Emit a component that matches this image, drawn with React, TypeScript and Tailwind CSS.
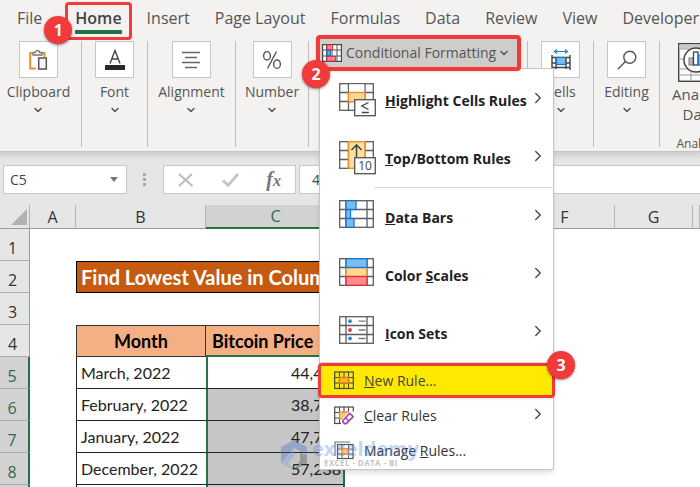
import { type ReactNode } from "react"
import clsx from "clsx"
import { ChevronDown, ChevronRight } from "lucide-react"

const tabs = ["File", "Home", "Insert", "Page Layout", "Formulas", "Data", "Review", "View", "Developer"]

const rows = [
  { n: 5, month: "March, 2022", price: "44,458" },
  { n: 6, month: "February, 2022", price: "38,733" },
  { n: 7, month: "January, 2022", price: "47,733" },
  { n: 8, month: "December, 2022", price: "57,238" },
  { n: 9, month: "November, 2022", price: "61,320" },
]

function Badge({ children, className }: { children: ReactNode; className: string }) {
  return (
    <span
      className={clsx(
        "absolute z-30 flex size-7 items-center justify-center rounded-full bg-[#f23a3a] text-base font-bold text-white shadow-sm shadow-black/40",
        className
      )}
    >
      {children}
    </span>
  )
}

/* Ribbon icons */

function ClipboardIcon() {
  return (
    <svg width="20" height="22" viewBox="0 0 20 22" fill="none">
      <path d="M6 4H2.2v15.5H8M14 4h2.5v4" stroke="#e8912d" strokeWidth="2" />
      <path d="M5 6V3.5h2.5a2 2 0 0 1 4 0H14V6z" fill="#fff" stroke="#777" strokeWidth="1.3" />
      <rect x="10.7" y="9" width="7.6" height="11" fill="#f5f5f5" stroke="#555" strokeWidth="1.5" />
    </svg>
  )
}

function FontIcon() {
  return (
    <svg width="20" height="22" viewBox="0 0 20 22" fill="none">
      <path d="M5 14.5 10 1.5l5 13M6.8 10h6.4" stroke="#444" strokeWidth="1.4" />
      <rect x="0" y="16" width="20" height="5" fill="#2b2627" />
    </svg>
  )
}

function AlignIcon() {
  return (
    <svg width="18" height="20" viewBox="0 0 18 20" stroke="#666" strokeWidth="1.5">
      <path d="M0 2.5h18M3 7.5h12M0 12.5h18M3 17.5h12" />
    </svg>
  )
}

function PercentIcon() {
  return (
    <svg width="20" height="20" viewBox="0 0 20 20" fill="none" stroke="#555" strokeWidth="1.4">
      <ellipse cx="5" cy="5.8" rx="3.4" ry="4.2" />
      <ellipse cx="15" cy="14.2" rx="3.4" ry="4.2" />
      <path d="M14.5 1.5 5.5 18.5" />
    </svg>
  )
}

function CellsIcon() {
  return (
    <svg width="20" height="22" viewBox="0 0 20 22" fill="none">
      <path d="M1 6v15M5 8v12M15 8v12M19 6v15M1 8.5h18M1 14h4M15 14h4M1 18.5h18" stroke="#444" strokeWidth="1.4" />
      <rect x="5.5" y="8.5" width="9" height="7" fill="#7cbcf0" stroke="#1a73c7" strokeWidth="1.2" />
      <path d="M4 2.5h12M6 .5l-2.5 2 2.5 2M14 .5l2.5 2-2.5 2" stroke="#2b7cd3" strokeWidth="1.2" />
    </svg>
  )
}

function SearchIcon() {
  return (
    <svg width="20" height="20" viewBox="0 0 20 20" fill="none" stroke="#555" strokeWidth="1.4">
      <circle cx="12.8" cy="7.2" r="6" />
      <path d="M8.5 11.5.8 19.2" />
    </svg>
  )
}

function AnalyzeIcon() {
  return (
    <svg width="42" height="39" viewBox="0 0 42 39" fill="none">
      <rect x=".7" y=".7" width="40.6" height="37.6" fill="#fafafa" stroke="#444" strokeWidth="1.4" />
      <path d="M1.4 1.4h39v4h-39z" fill="#c9c9c9" />
      <path d="M1 6h40M1 16h6M1 26h9M1 32h40M13 26v12M27 32v6" stroke="#999" />
      <circle cx="18" cy="17" r="12" fill="#fff" stroke="#444" strokeWidth="1.5" />
      <rect x="11" y="15" width="4" height="7" fill="#bbb" stroke="#777" />
      <rect x="15.5" y="9" width="4.5" height="13" fill="#fff" stroke="#444" strokeWidth="1.3" />
      <rect x="20.5" y="12" width="4" height="10" fill="#7cbcf0" stroke="#1a73c7" />
    </svg>
  )
}

function ConditionalIcon() {
  return (
    <svg width="20" height="18" viewBox="0 0 20 18" fill="none">
      <rect x=".6" y=".6" width="18.8" height="16.8" fill="#fff" stroke="#444" strokeWidth="1.2" />
      <path d="M4.5 0v18M15 0v18M0 6h20M0 12h20M10 6v6" stroke="#555" />
      <rect x="5" y="1" width="5.5" height="4.5" fill="#ff8a8f" stroke="#e8323c" />
      <rect x="5" y="6.5" width="3.5" height="5" fill="#5ba7e8" stroke="#1a73c7" />
      <rect x="5" y="12.5" width="8.5" height="4.5" fill="#ff8a8f" stroke="#e8323c" />
    </svg>
  )
}

/* Large menu icons share one cell grid */

function Grid({ children, cols = "M7 1v26M28 1v26" }: { children?: ReactNode; cols?: string }) {
  return (
    <svg width="38" height="34" viewBox="0 0 38 34" fill="none">
      <rect x=".7" y=".7" width="33.6" height="26.6" fill="#fff" stroke="#5c5c5c" strokeWidth="1.3" />
      <path d={cols} stroke="#5c5c5c" strokeWidth="1.3" />
      <path d="M1 9.5h33M1 18.5h33" stroke="#5c5c5c" strokeWidth="1.3" />
      {children}
    </svg>
  )
}

const highlightIcon = (
  <Grid cols="M9.5 1v26M26 1v26">
    <rect x="10.2" y="1.4" width="15" height="7.5" fill="#fff" />
    <rect x="9.5" y="9.5" width="16.5" height="9" fill="#fbd995" stroke="#e8912d" strokeWidth="1.4" />
    <rect x="15.7" y="16.7" width="20.6" height="16" fill="#fff" stroke="#5c5c5c" strokeWidth="1.4" />
    <path d="M29.5 19.5 22.8 23l6.7 3.5M22.8 29.5h7" stroke="#444" strokeWidth="1.3" />
  </Grid>
)

const topBottomIcon = (
  <Grid cols="M9.5 1v26M26 1v26">
    <rect x="9.5" y=".7" width="16.5" height="26.6" fill="#fbdf9f" stroke="#e8912d" strokeWidth="1.5" />
    <path d="M17.5 17V4M12.5 9l5-5.2 5 5.2" stroke="#444" strokeWidth="1.5" />
    <rect x="15.7" y="16.7" width="20.6" height="16" fill="#fff" stroke="#5c5c5c" strokeWidth="1.4" />
    <text x="26" y="29" textAnchor="middle" fontSize="12" fontWeight="400" fill="#444">
      10
    </text>
  </Grid>
)

const dataBarsIcon = (
  <Grid>
    <rect x="7" y=".7" width="10" height="8.8" fill="#7cbcf0" stroke="#1a73c7" strokeWidth="1.3" />
    <rect x="7" y="9.5" width="4.5" height="9" fill="#7cbcf0" stroke="#1a73c7" strokeWidth="1.3" />
    <rect x="7" y="18.5" width="8" height="8.8" fill="#7cbcf0" stroke="#1a73c7" strokeWidth="1.3" />
  </Grid>
)

const colorScalesIcon = (
  <Grid>
    <rect x="7" y="9.5" width="21" height="9" fill="#fbd98f" stroke="#e8912d" strokeWidth="1.3" />
    <rect x="7" y=".7" width="21" height="8.8" fill="#7cbcf0" stroke="#1a73c7" strokeWidth="1.3" />
    <rect x="7" y="18.5" width="21" height="8.8" fill="#ff8a8f" stroke="#d92f38" strokeWidth="1.3" />
  </Grid>
)

const iconSetsIcon = (
  <Grid>
    <circle cx="11" cy="5.2" r="1.9" fill="#2b88d8" />
    <circle cx="11" cy="14" r="1.9" fill="#e8323c" />
    <circle cx="11" cy="22.5" r="1.9" fill="#2b88d8" />
    <path d="M19.5 5.2h7M19.5 14h7M19.5 22.5h7" stroke="#777" strokeWidth="1.3" />
  </Grid>
)

function SmallGrid({ children, fill = "#fff" }: { children?: ReactNode; fill?: string }) {
  return (
    <svg width="20" height="19" viewBox="0 0 20 19" fill="none">
      <rect x=".7" y="1" width="18.6" height="16.5" fill={fill} stroke="#4a4a4a" strokeWidth="1.2" />
      <path d="M5.5 1v17M14.5 1v17M0 6.5h20M0 12h20M10 1v17" stroke="#4a4a4a" strokeWidth="1.1" />
      {children}
    </svg>
  )
}

const newRuleIcon = (
  <SmallGrid fill="#ffe800">
    <rect x="5.5" y="6.5" width="9" height="5.5" fill="#fbb829" stroke="#e87a1d" strokeWidth="1.4" />
  </SmallGrid>
)

const clearIcon = (
  <SmallGrid>
    <rect x="5.5" y="6" width="9" height="6.5" fill="#fbc878" stroke="#e8912d" strokeWidth="1.3" />
    <path d="M7 19v-5l8.5-8.5H20V19z" fill="#fff" />
    <path d="m8.8 14.5 7-7 3.4 3.2-7 7h-1.6l-1.8-1.7z" fill="#fff" stroke="#9b45b5" strokeWidth="1.7" />
    <path d="m11.5 11.8 3.5 3.4" stroke="#9b45b5" strokeWidth="1.5" />
  </SmallGrid>
)

const manageIcon = (
  <svg width="20" height="19" viewBox="0 0 20 19" fill="none">
    <path d="M1 15V1h15" stroke="#777" strokeWidth="1.2" />
    <rect x="3.5" y="3.5" width="15.5" height="14" fill="#fff" stroke="#555" strokeWidth="1.2" />
    <path d="M8 3.5v14M14.5 3.5v14M3.5 8h15.5M3.5 13h15.5" stroke="#666" />
    <rect x="8" y="8" width="6.5" height="5" fill="#fbc878" stroke="#e8912d" strokeWidth="1.2" />
  </svg>
)

function Group({ icon, label, className }: { icon: ReactNode; label: string; className: string }) {
  return (
    <div className={clsx("mt-1.5 flex h-[106px] shrink-0 justify-center border-r border-[#bdbdbd]", className)}>
      <button type="button" className="flex flex-col items-center">
        <span className="flex h-[37px] w-[39px] items-center justify-center border border-[#c8c6c4] bg-white">
          {icon}
        </span>
        <span className="mt-1 leading-5">{label}</span>
        <ChevronDown size={12} strokeWidth={3} className="mt-0.5" />
      </button>
    </div>
  )
}

function LargeItem({ icon, children }: { icon: ReactNode; children: ReactNode }) {
  return (
    <button
      type="button"
      role="menuitem"
      className="flex h-[58px] w-full items-center pr-1.5 pl-[19px] text-left font-bold text-[#222]"
    >
      {icon}
      <span className="mt-0.5 ml-2 flex-1 whitespace-nowrap">{children}</span>
      <ChevronRight size={18} strokeWidth={1.75} className="mb-1 text-[#444]" />
    </button>
  )
}

function SmallItem({ icon, arrow, children }: { icon: ReactNode; arrow?: boolean; children: ReactNode }) {
  return (
    <button type="button" role="menuitem" className="flex h-[35px] w-full items-center pr-1.5 pl-3.5 text-left text-[#333]">
      {icon}
      <span className="ml-2.5 flex-1 whitespace-nowrap">{children}</span>
      {arrow && <ChevronRight size={18} strokeWidth={1.75} className="mb-1 text-[#444]" />}
    </button>
  )
}

function RulesMenu() {
  return (
    <div
      role="menu"
      className="absolute top-[33px] left-[3px] z-10 w-[235px] border border-[#c6c6c6] bg-white pt-0.5 pb-px shadow-md"
    >
      <LargeItem icon={highlightIcon}>
        <u>H</u>ighlight Cells Rules
      </LargeItem>
      <LargeItem icon={topBottomIcon}>
        <u>T</u>op/Bottom Rules
      </LargeItem>
      <div className="ml-[54px] h-px bg-[#dcdcdc]" />
      <LargeItem icon={dataBarsIcon}>
        <u>D</u>ata Bars
      </LargeItem>
      <LargeItem icon={colorScalesIcon}>
        Color <u>S</u>cales
      </LargeItem>
      <LargeItem icon={iconSetsIcon}>
        <u>I</u>con Sets
      </LargeItem>
      <div className="h-px bg-[#dcdcdc]" />
      <div className="relative -mx-0.5">
        <button
          type="button"
          role="menuitem"
          className="flex h-[35px] w-full items-center rounded border-3 border-[#f23a3a] bg-[#ffe900] pl-[13px] text-left text-[#444] shadow-sm"
        >
          {newRuleIcon}
          <span className="ml-2.5">
            <u>N</u>ew Rule...
          </span>
        </button>
        <Badge className="-top-3 -right-5">3</Badge>
      </div>
      <SmallItem icon={clearIcon} arrow>
        <u>C</u>lear Rules
      </SmallItem>
      <SmallItem icon={manageIcon}>
        Manage <u>R</u>ules...
      </SmallItem>
      <Watermark />
    </div>
  )
}

function Watermark() {
  return (
    <div className="pointer-events-none absolute -bottom-0.5 -left-10 flex items-center opacity-35">
      <svg width="28" height="32" viewBox="0 0 28 32">
        <path d="M14 1 27 8v8l-13-7L1 24V8z" fill="#3f66d0" />
        <path d="m1 24 13-15v8l-6 7 6 7z" fill="#7b9bea" />
        <path d="m27 16-7-2v8l-6 9 13-7z" fill="#444" />
      </svg>
      <div className="ml-1 pb-1">
        <div className="text-xl leading-5 font-bold text-[#5a86ee]">exceldemy</div>
        <div className="ml-3 text-[8px] leading-2 font-bold tracking-wider text-[#555]">EXCEL - DATA - BI</div>
      </div>
    </div>
  )
}

function Ribbon() {
  return (
    <div className="relative z-10 flex h-[117px] border-b border-[#c4c4c4] bg-[#f3f2f1] text-sm text-[#555]">
      <Group icon={<ClipboardIcon />} label="Clipboard" className="w-[82px] pr-1" />
      <Group icon={<FontIcon />} label="Font" className="w-[66px]" />
      <Group icon={<AlignIcon />} label="Alignment" className="w-[88px]" />
      <Group icon={<PercentIcon />} label="Number" className="w-[73px]" />
      <div className="relative w-[219px] shrink-0 pl-[7px]">
        <div className="absolute top-1.5 right-0 h-[106px] w-px bg-[#bdbdbd]" />
        <div className="relative w-[205px]">
          <button
            type="button"
            aria-haspopup="menu"
            className="relative z-20 flex h-9 w-full items-center rounded border-4 border-[#f23a3a] bg-[#cfcdcb] pl-0.5 whitespace-nowrap shadow-sm"
          >
            <ConditionalIcon />
            <span className="ml-1">Conditional Formatting</span>
            <ChevronDown size={12} strokeWidth={3} className="ml-0.5" />
          </button>
          <Badge className="top-[25px] -left-3.5">2</Badge>
          <RulesMenu />
        </div>
      </div>
      <Group icon={<CellsIcon />} label="Cells" className="w-[66px]" />
      <Group icon={<SearchIcon />} label="Editing" className="w-[66px]" />
      <div className="flex w-[78px] shrink-0 flex-col items-center pt-2">
        <button type="button" className="flex flex-col items-center text-[15px] leading-5">
          <AnalyzeIcon />
          <span className="mt-0.5">Analyze</span>
          <span>Data</span>
        </button>
        <span className="mt-3 text-xs">Analysis</span>
      </div>
    </div>
  )
}

function FormulaBar() {
  return (
    <div className="flex h-[53px] items-start bg-[#e6e6e6] bg-linear-to-b from-[#cfcfcf] to-[#e6e6e6] to-15% pt-[13px] pl-[3px]">
      <div className="flex h-[29px] w-[124px] shrink-0 items-center border border-[#c8c8c8] bg-white pr-2">
        <input
          aria-label="Name Box"
          defaultValue="C5"
          className="w-full min-w-0 flex-1 pl-1.5 text-sm text-[#444] outline-none"
        />
        <svg width="8" height="5" viewBox="0 0 8 5">
          <path d="M0 0h8L4 5z" fill="#777" />
        </svg>
      </div>
      <svg width="3" height="13" viewBox="0 0 3 13" className="mx-4 mt-2 shrink-0" fill="#aaa">
        <path d="M0 0h3v3H0zM0 5h3v3H0zM0 10h3v3H0z" />
      </svg>
      <div className="ml-px flex h-[29px] w-[133px] shrink-0 items-center justify-between border border-[#c8c8c8] bg-white px-3.5">
        <button type="button" aria-label="Cancel">
          <svg width="16" height="14" viewBox="0 0 16 14" stroke="#bcbcbc" strokeWidth="2" fill="none">
            <path d="m1 1 13.5 12M14 1 1 13" />
          </svg>
        </button>
        <button type="button" aria-label="Enter">
          <svg width="17" height="14" viewBox="0 0 17 14" stroke="#c4c4c4" strokeWidth="2.8" fill="none">
            <path d="m1 7.5 5 5L16 1" />
          </svg>
        </button>
        <button
          type="button"
          aria-label="Insert Function"
          className="font-['Liberation_Serif',serif] text-xl leading-6 font-bold text-[#777] italic"
        >
          f<span className="text-base">x</span>
        </button>
      </div>
      <input
        aria-label="Formula Bar"
        defaultValue="44458"
        className="ml-[3px] h-[29px] min-w-0 flex-1 border border-r-0 border-[#c8c8c8] bg-white pl-3 text-sm text-[#444] outline-none"
      />
    </div>
  )
}

function RowHeader({ n, selected }: { n: number; selected?: boolean }) {
  return (
    <th
      scope="row"
      className={clsx(
        "border-b border-b-[#ababab] pt-1.5 pr-1 text-center font-['Open_Sans',sans-serif] text-base leading-5 font-normal",
        selected ? "border-r-2 border-r-[#217346] bg-[#d2d2d2] text-[#2f6b4b]" : "border-r border-r-[#9b9b9b] bg-[#e6e6e6] text-[#333]"
      )}
    >
      {n}
    </th>
  )
}

function Sheet() {
  const head = "border-r border-b border-b-[#9b9b9b] border-r-[#b5b5b5] p-0 font-normal"
  return (
    <table className="w-full table-fixed border-separate border-spacing-0 bg-white font-[Lato,sans-serif] text-base text-[#222]">
      <colgroup>
        <col className="w-[30px]" />
        <col className="w-[46px]" />
        <col className="w-[130px]" />
        <col className="w-[139px]" />
        <col className="w-[85px]" />
        <col className="w-[85px]" />
        <col className="w-[100px]" />
        <col className="w-[78px]" />
        <col />
      </colgroup>
      <thead>
        <tr className="h-6 bg-[#e6e6e6] font-['Open_Sans',sans-serif] leading-5 text-[#333]">
          <td className={head}>
            <svg width="16" height="16" viewBox="0 0 16 16" className="mr-0.5 ml-auto">
              <path d="M16 0v16H0z" fill="#b2b2b2" />
            </svg>
          </td>
          {["A", "B", "C", "D", "E", "F", "G", ""].map((c, i) => (
            <th
              key={i}
              scope="col"
              className={c === "C" ? "border-b-2 border-[#217346] bg-[#d2d2d2] p-0 font-normal text-[#2f6b4b]" : head}
            >
              {c}
            </th>
          ))}
        </tr>
      </thead>
      <tbody>
        <tr className="h-8">
          <RowHeader n={1} />
          <td colSpan={8} />
        </tr>
        <tr className="h-8">
          <RowHeader n={2} />
          <td />
          <td
            colSpan={2}
            className="overflow-hidden border border-black bg-[#c55a11] pl-1 text-xl leading-6 font-bold whitespace-nowrap text-white"
          >
            Find Lowest Value in Column
          </td>
          <td colSpan={5} />
        </tr>
        <tr className="h-8">
          <RowHeader n={3} />
          <td colSpan={8} />
        </tr>
        <tr className="h-8 text-lg leading-6 font-bold text-black">
          <RowHeader n={4} />
          <td />
          <td className="border border-[#333] bg-[#f4b084] text-center">Month</td>
          <td className="overflow-hidden border-y border-t-[#333] border-b-2 border-b-[#217346] bg-[#f4b084] pl-1.5 whitespace-nowrap">
            Bitcoin Price
          </td>
          <td colSpan={5} />
        </tr>
        {rows.map((row, i) => (
          <tr key={row.n} className="h-8">
            <RowHeader n={row.n} selected />
            <td />
            <td className="border-b border-l border-[#222] pl-1 leading-5">{row.month}</td>
            <td
              className={clsx(
                "border-x-2 border-b border-x-[#217346] border-b-[#222] pr-0.5 text-right leading-5",
                i > 0 && "bg-[#c6c6c6]"
              )}
            >
              {row.price}
            </td>
            <td colSpan={5} />
          </tr>
        ))}
      </tbody>
    </table>
  )
}

export default function App() {
  return (
    <div className="h-screen overflow-hidden bg-white font-['Open_Sans','Noto_Sans',sans-serif]">
      {/* Ribbon tabs */}
      <nav className="relative z-20 flex h-[35px] items-center gap-[25px] bg-[#f3f2f1] pl-[17px] text-base whitespace-nowrap text-[#555]">
        {tabs.map((tab) =>
          tab === "Home" ? (
            <div key={tab} className="relative ml-2">
              <a href="#home" className="font-semibold text-[#444]">
                {tab}
              </a>
              <span className="absolute inset-x-0 top-[24px] h-1 bg-[#217346]" />
              <span className="absolute -inset-x-2.5 -top-1 h-[38px] rounded border-3 border-[#f23a3a]" />
              <Badge className="top-2.5 -left-[31px]">1</Badge>
            </div>
          ) : (
            <a key={tab} href="#tab">
              {tab}
            </a>
          )
        )}
      </nav>
      <Ribbon />
      <FormulaBar />
      <Sheet />
    </div>
  )
}
